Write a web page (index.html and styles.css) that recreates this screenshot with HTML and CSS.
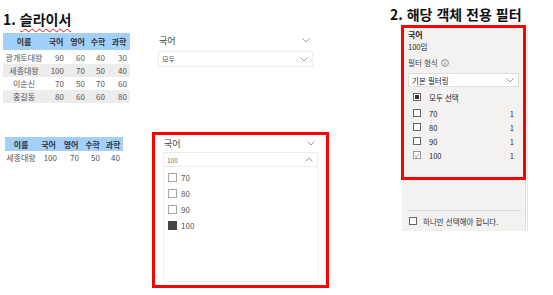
FILE: index.html
```html
<!DOCTYPE html>
<html lang="ko">
<head>
  <meta charset="UTF-8">
  <title>슬라이서와 객체 전용 필터</title>
  <link rel="stylesheet" href="styles.css">
</head>
<body>
  <div class="page">

    <!-- 1. 슬라이서 : tables -->
    <section class="col-left">
      <h2 class="title title-one">1. <span class="typo">슬라이서</span></h2>

      <table class="grid grid-main">
        <colgroup><col class="c-name"><col class="c-a"><col class="c-b"><col class="c-c"><col class="c-d"></colgroup>
        <thead>
          <tr><th>이름</th><th>국어</th><th>영어</th><th>수학</th><th>과학</th></tr>
        </thead>
        <tbody>
          <tr><td>광개토대왕</td><td>90</td><td>60</td><td>40</td><td>30</td></tr>
          <tr class="alt"><td>세종대왕</td><td>100</td><td>70</td><td>50</td><td>40</td></tr>
          <tr><td>이순신</td><td>70</td><td>50</td><td>70</td><td>60</td></tr>
          <tr class="alt"><td>홍길동</td><td>80</td><td>60</td><td>60</td><td>80</td></tr>
        </tbody>
      </table>

      <table class="grid grid-small">
        <colgroup><col class="s-name"><col class="s-a"><col class="s-b"><col class="s-c"><col class="s-d"></colgroup>
        <thead>
          <tr><th>이름</th><th>국어</th><th>영어</th><th>수학</th><th>과학</th></tr>
        </thead>
        <tbody>
          <tr><td>세종대왕</td><td>100</td><td>70</td><td>50</td><td>40</td></tr>
        </tbody>
      </table>
    </section>

    <!-- slicers -->
    <section class="col-mid">
      <div class="slicer slicer-plain">
        <div class="slicer-head">
          <span>국어</span>
          <svg class="chev" width="8" height="5" viewBox="0 0 8 5"><polyline points="0.5,0.5 4,4 7.5,0.5"/></svg>
        </div>
        <div class="dropdown">
          <span>모두</span>
          <svg class="chev" width="8" height="5" viewBox="0 0 8 5"><polyline points="0.5,0.5 4,4 7.5,0.5"/></svg>
        </div>
      </div>

      <div class="slicer slicer-open">
        <div class="slicer-head">
          <span>국어</span>
          <svg class="chev" width="8" height="5" viewBox="0 0 8 5"><polyline points="0.5,0.5 4,4 7.5,0.5"/></svg>
        </div>
        <div class="dropdown dropdown-small">
          <span>100</span>
          <svg class="chev" width="8" height="5" viewBox="0 0 8 5"><polyline points="0.5,4.5 4,1 7.5,4.5"/></svg>
        </div>
        <ul class="options">
          <li><span class="box"></span>70</li>
          <li><span class="box"></span>80</li>
          <li><span class="box"></span>90</li>
          <li><span class="box box-on"></span>100</li>
        </ul>
      </div>
    </section>

    <!-- 2. 해당 객체 전용 필터 -->
    <section class="col-right">
      <h2 class="title">2. 해당 객체 전용 필터</h2>
      <div class="filter-pane">
        <div class="filter-card">
          <div class="f-name">국어</div>
          <div class="f-value">100임</div>
          <div class="f-label">필터 형식
            <svg width="8" height="8" viewBox="0 0 8 8"><circle cx="4" cy="4" r="3.4"/><line x1="4" y1="3.4" x2="4" y2="6"/><line x1="4" y1="1.9" x2="4" y2="2.6"/></svg>
          </div>
          <div class="f-select">
            <span>기본 필터링</span>
            <svg class="chev" width="8" height="5" viewBox="0 0 8 5"><polyline points="0.5,0.5 4,4 7.5,0.5"/></svg>
          </div>
          <ul class="f-list">
            <li class="f-all"><span class="fbox fbox-part"></span>모두 선택</li>
            <li><span class="fbox"></span><span class="f-text">70</span><span class="f-count">1</span></li>
            <li><span class="fbox"></span><span class="f-text">80</span><span class="f-count">1</span></li>
            <li><span class="fbox"></span><span class="f-text">90</span><span class="f-count">1</span></li>
            <li>
              <span class="fbox fbox-check"><svg width="7" height="7" viewBox="0 0 7 7"><polyline points="1,3.8 2.8,5.5 6,1.5"/></svg></span>
              <span class="f-text">100</span><span class="f-count">1</span>
            </li>
          </ul>
        </div>
        <div class="filter-foot">
          <span class="fbox"></span>하나만 선택해야 합니다.
        </div>
      </div>
    </section>

  </div>
</body>
</html>
```

FILE: styles.css
```css
body { margin: 0; background: #fff; font-family: "Noto Sans CJK KR", "Noto Sans", sans-serif; color: #333; }
.page { display: flex; align-items: flex-start; }
ul { list-style: none; margin: 0; padding: 0; }

.title { margin: 0; font-size: 14px; line-height: 16px; font-weight: bold; color: #111; white-space: nowrap; }
.typo { text-decoration: underline wavy #e02020; text-decoration-thickness: 1px; text-underline-offset: 3px; }

/* left column: tables */
.col-left { width: 137px; padding: 11px 0 0 3px; }
.grid { border-collapse: collapse; table-layout: fixed; font-size: 8px; color: #555; }
.grid th { background: #a3d0fb; color: #333; font-weight: bold; text-align: center; padding: 0; }
.grid td { text-align: right; padding: 0 3px 0 0; line-height: 13px; height: 13px; }
.grid td:first-child { text-align: center; padding: 0; }
.grid .alt td { background: #ececec; }

.grid-main { width: 127px; margin-top: 6px; }
.grid-main th { height: 17px; border-bottom: 1px solid #fff; }
.c-name { width: 42px; } .c-a { width: 22px; } .c-b { width: 21px; } .c-c { width: 20px; } .c-d { width: 22px; }

.grid-small { width: 118px; margin: 34px 0 0 2px; }
.grid-small th { height: 14px; }
.s-name { width: 32px; } .s-a { width: 23px; } .s-b { width: 22px; } .s-c { width: 21px; } .s-d { width: 20px; }

/* middle column: slicers */
.col-mid { width: 177px; margin-left: 12px; padding-top: 29px; }
.slicer { width: 155px; padding: 0 8px 3px; border: 3px solid transparent; }
.slicer-plain { margin-left: -5px; }
.slicer-open { border-color: #ff0000; margin-top: 59px; height: 147px; }
.slicer-head { display: flex; justify-content: space-between; align-items: center; height: 16px; padding-left: 1px; font-size: 9px; color: #444; }
.slicer-head .chev { margin-right: 3px; }
.chev { fill: none; stroke: #9a9a9a; stroke-width: 1; }
.dropdown { display: flex; justify-content: space-between; align-items: center; height: 16px; margin-top: 3px; padding: 0 4px 0 3px; border: 1px solid #ececec; box-sizing: border-box; font-size: 7px; color: #555; }
.dropdown-small { height: 15px; margin-top: 1px; font-size: 6.5px; color: #777; }
.options { height: 115px; box-sizing: border-box; padding: 2px 0 0 4px; border: 1px solid #eeeeee; border-top: none; }
.options li { display: flex; align-items: center; height: 16px; font-size: 8px; color: #555; }
.box { width: 9px; height: 9px; box-sizing: border-box; border: 1px solid #a6a6a6; margin-right: 4px; }
.box-on { background: #444; border-color: #444; }

/* right column: filter pane */
.col-right { margin-left: 61px; padding-top: 6px; }
.filter-pane { width: 123px; height: 206px; margin: 3px 0 0 12px; background: #f3f2f1; box-shadow: 1px 0 0 #e1dfdd, 2px 0 0 #fff, 3px 0 0 #e6e6e6; display: flex; flex-direction: column; color: #252423; font-size: 7.5px; }
.filter-card { height: 155px; box-sizing: border-box; border: 3px solid #ff0000; padding: 1px 4px 0; margin-left: -1px; width: 125px; }
.f-name { line-height: 12px; font-weight: bold; font-size: 8px; }
.f-value { line-height: 12px; }
.f-label { line-height: 12px; margin-top: 4px; display: flex; align-items: center; gap: 3px; color: #444; }
.f-label svg { fill: none; stroke: #777; stroke-width: 0.8; }
.f-select { display: flex; justify-content: space-between; align-items: center; height: 14px; margin-top: 4px; padding: 0 4px 0 3px; box-sizing: border-box; background: #fff; border: 1px solid #e1dfdd; }
.f-list { margin-top: 3px; padding-left: 5px; }
.f-list li { display: flex; align-items: center; height: 14px; }
.f-list .f-all { margin-bottom: 2px; }
.f-text { flex: 1; }
.f-count { margin-right: 5px; }
.fbox { width: 8px; height: 8px; box-sizing: border-box; border: 1px solid #666; margin-right: 8px; display: flex; align-items: center; justify-content: center; background: #fff; }
.fbox-part::after { content: ""; width: 4px; height: 4px; background: #333; }
.fbox-check { border-color: #999; }
.fbox-check svg { fill: none; stroke: #777; stroke-width: 0.9; }
.filter-foot { margin: 30px 4px 0 5px; padding: 5px 0 0 2px; border-top: 1px solid #dcdcdc; display: flex; align-items: center; height: 10px; color: #333; }
.filter-foot .fbox { margin-right: 6px; }
```
